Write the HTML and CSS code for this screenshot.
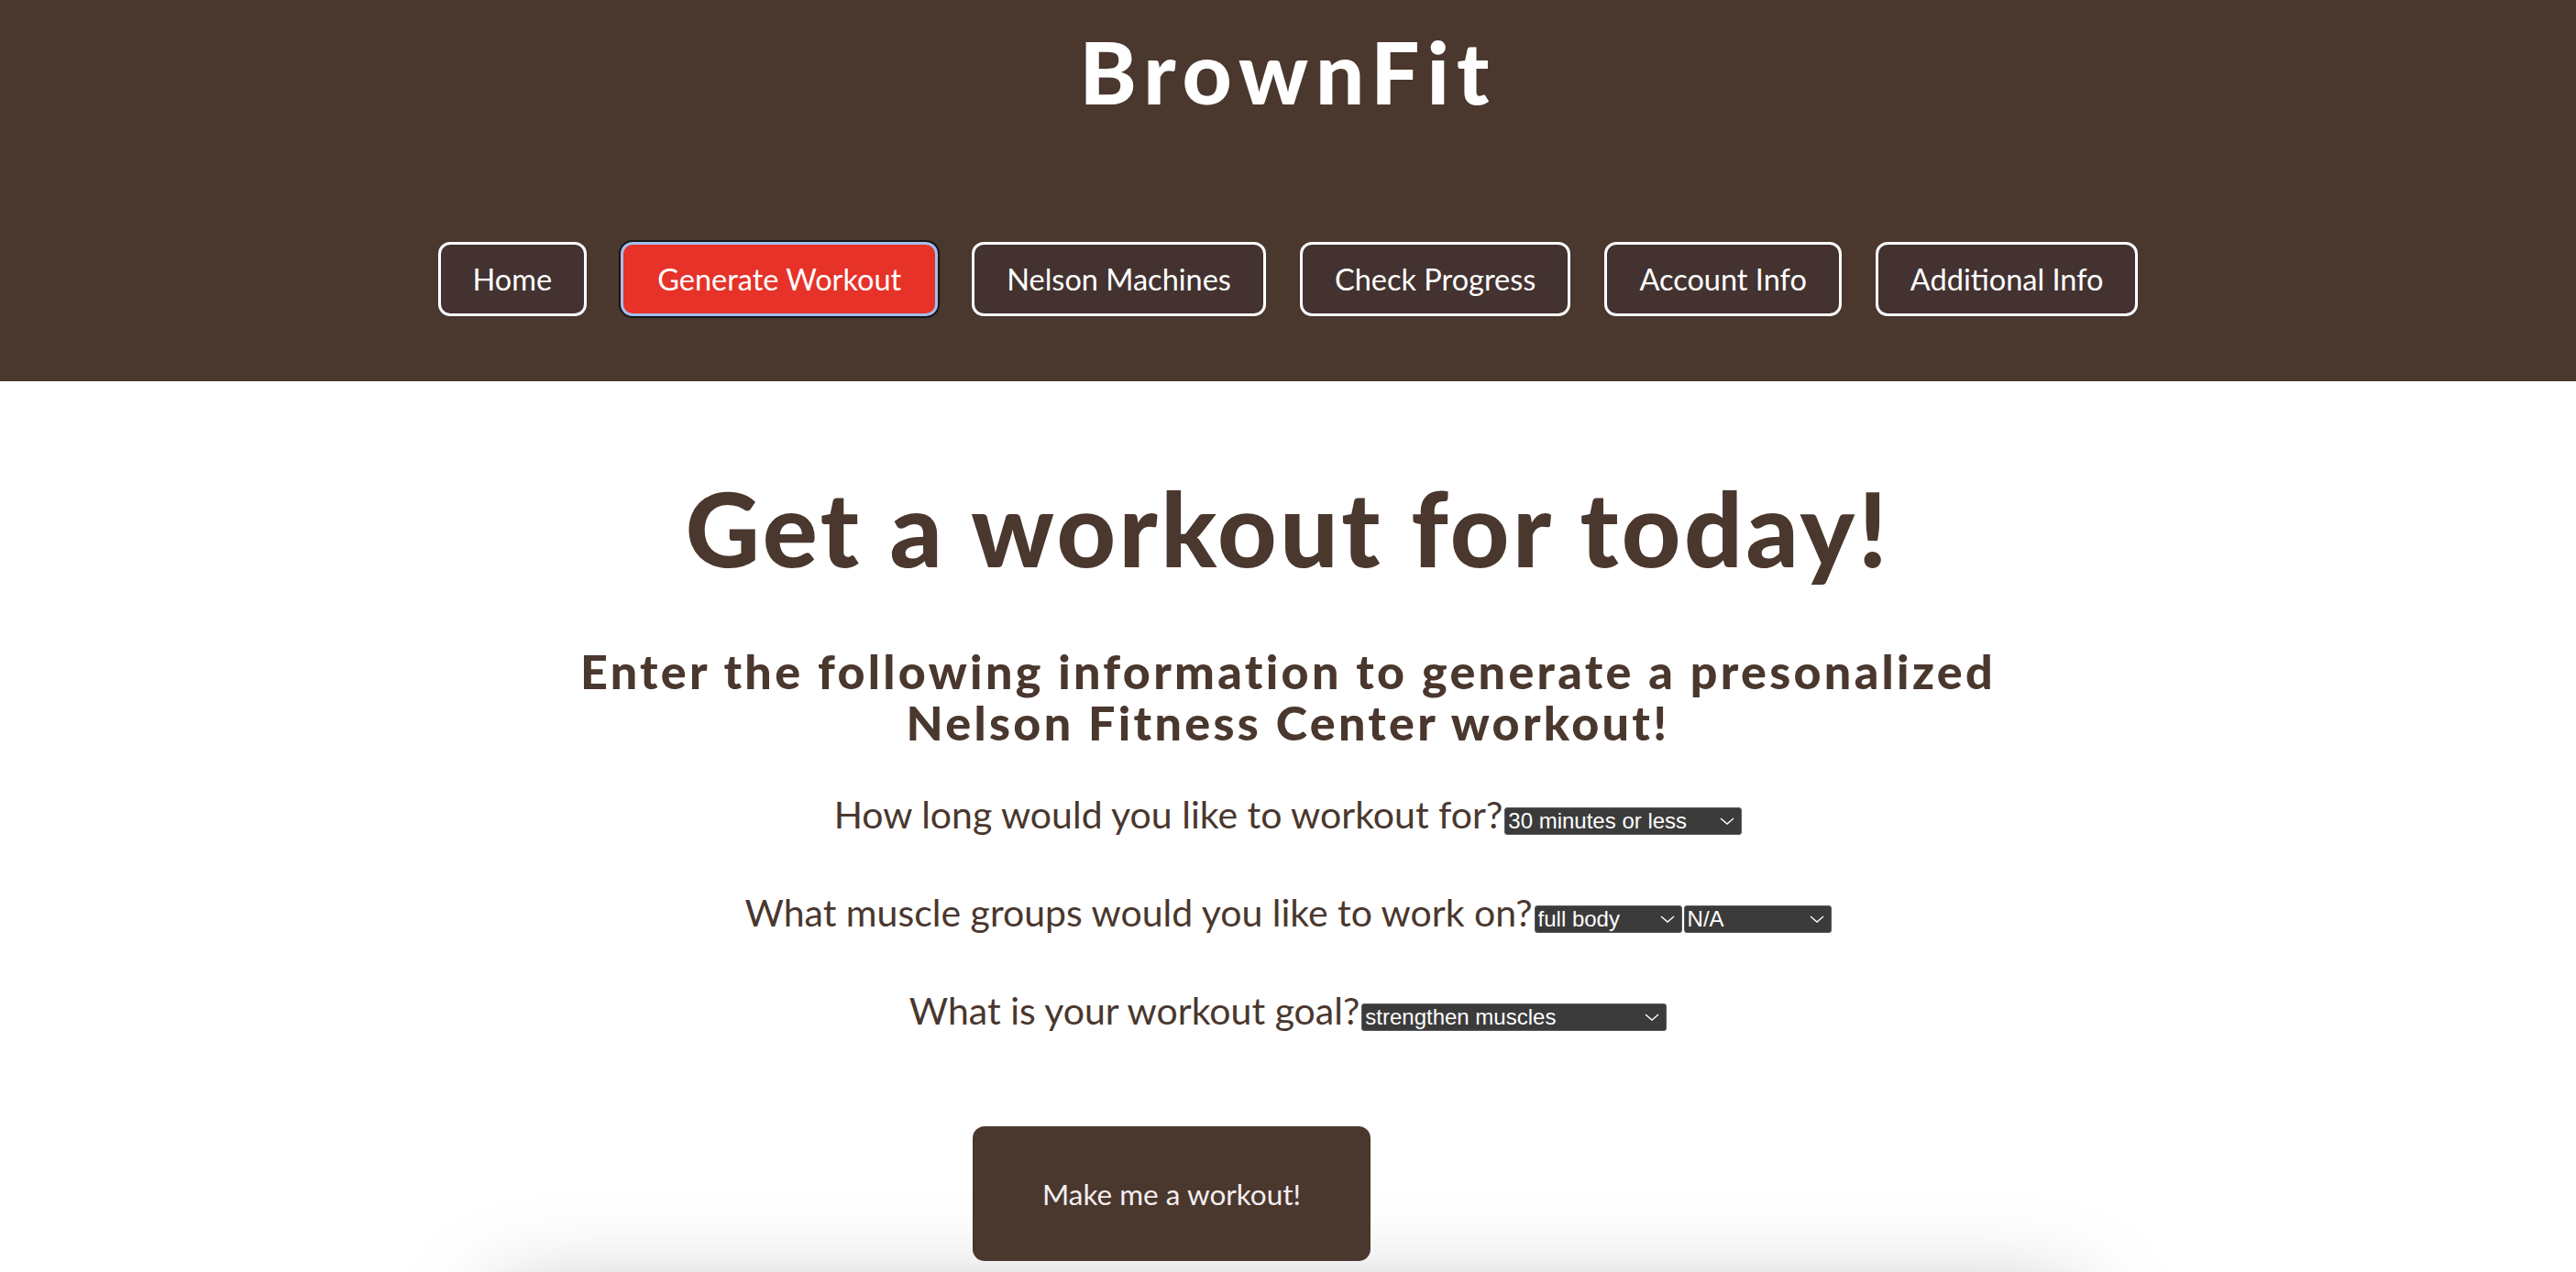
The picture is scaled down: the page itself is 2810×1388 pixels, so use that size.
FILE: index.html
```html
<!DOCTYPE html>
<html lang="en">
<head>
<meta charset="utf-8">
<title>BrownFit - Generate Workout</title>
<link rel="stylesheet" href="styles.css">
</head>
<body>
<header class="site-header">
  <h1 class="brand">BrownFit</h1>
  <nav class="nav">
    <a class="nav-btn" href="#">Home</a>
    <a class="nav-btn nav-btn--active" href="#">Generate Workout</a>
    <a class="nav-btn" href="#">Nelson Machines</a>
    <a class="nav-btn" href="#">Check Progress</a>
    <a class="nav-btn" href="#">Account Info</a>
    <a class="nav-btn" href="#">Additional Info</a>
  </nav>
</header>
<main class="main">
  <h2 class="page-title">Get a workout for today!</h2>
  <h3 class="intro">Enter the following information to generate a presonalized<br>Nelson Fitness Center workout!</h3>
  <form class="workout-form">
    <div class="question">How long would you like to workout for?<span class="select-wrap"><select class="select select--time"><option>30 minutes or less</option><option>30 - 60 minutes</option><option>60 minutes or more</option></select><svg class="chevron" viewBox="0 0 16 8" width="16" height="8"><path d="M1 1 L8 7 L15 1" fill="none" stroke="#ffffff" stroke-width="1.4"/></svg></span></div>
    <div class="question">What muscle groups would you like to work on?<span class="select-wrap"><select class="select select--group"><option>full body</option><option>arms</option><option>legs</option></select><svg class="chevron" viewBox="0 0 16 8" width="16" height="8"><path d="M1 1 L8 7 L15 1" fill="none" stroke="#ffffff" stroke-width="1.4"/></svg></span><span class="select-wrap"><select class="select select--group"><option>N/A</option><option>arms</option><option>legs</option></select><svg class="chevron" viewBox="0 0 16 8" width="16" height="8"><path d="M1 1 L8 7 L15 1" fill="none" stroke="#ffffff" stroke-width="1.4"/></svg></span></div>
    <div class="question">What is your workout goal?<span class="select-wrap"><select class="select select--goal"><option>strengthen muscles</option><option>lose weight</option><option>endurance</option></select><svg class="chevron" viewBox="0 0 16 8" width="16" height="8"><path d="M1 1 L8 7 L15 1" fill="none" stroke="#ffffff" stroke-width="1.4"/></svg></span></div>
    <div class="submit-row">
      <button type="button" class="submit-btn">Make me a workout!</button>
    </div>
  </form>
  <section class="results"></section>
</main>
</body>
</html>
```

FILE: styles.css
```css
html, body {
  margin: 0;
  padding: 0;
}

body {
  font-family: "Gill Sans", Lato, "Open Sans", sans-serif;
  background: #ffffff;
  color: #4a372e;
}

.site-header {
  background: #4a372e;
  height: 416px;
  box-sizing: border-box;
  padding-top: 22px;
}

.brand {
  margin: 0;
  text-align: center;
  color: #ffffff;
  font-size: 94px;
  font-weight: 900;
  line-height: 1.2;
  letter-spacing: 8px;
}

.nav {
  display: flex;
  justify-content: center;
  gap: 37px;
  margin-top: 129px;
}

.nav-btn {
  display: flex;
  align-items: center;
  height: 81px;
  box-sizing: border-box;
  padding: 0 35px;
  border: 3px solid #ffffff;
  border-radius: 13px;
  background: #433230;
  color: #ffffff;
  font-size: 32.5px;
  text-decoration: none;
}

.nav-btn--active {
  background: #e63228;
  border-color: #a3bfec;
  box-shadow: 0 0 0 2px #161616;
  padding: 0 37px;
}

.main {
  text-align: center;
}

.page-title {
  margin: 93px 0 0;
  font-size: 112px;
  font-weight: 900;
  line-height: 1.2;
  letter-spacing: 3.5px;
  color: #4a372e;
}

.intro {
  margin: 61px 0 0;
  font-size: 52px;
  font-weight: 900;
  line-height: 56px;
  letter-spacing: 3.3px;
  color: #4a372e;
}

.workout-form {
  margin-top: 49px;
}

.question {
  font-size: 41px;
  line-height: 48px;
  color: #4a372e;
  margin-bottom: 59px;
}

.select-wrap {
  position: relative;
  display: inline-flex;
  margin-left: 2px;
  vertical-align: baseline;
}

.select {
  appearance: none;
  -webkit-appearance: none;
  background-color: #3b3b3b;
  color: #ffffff;
  font-family: "Liberation Sans", Arial, sans-serif;
  font-size: 24px;
  line-height: 28px;
  height: 30px;
  padding: 0 0 0 3px;
  border: 1px solid #5a5a5a;
  border-radius: 3px;
  margin: 0;
  box-sizing: border-box;
}

.chevron {
  position: absolute;
  right: 8px;
  top: 11px;
  pointer-events: none;
}

.select--time { width: 259px; }
.select--group { width: 161px; }
.select--goal { width: 333px; }

.submit-row {
  display: flex;
  justify-content: center;
  padding-right: 254px;
  margin-top: 102px;
}

.submit-btn {
  width: 434px;
  height: 147px;
  border: none;
  border-radius: 13px;
  background: #4a372e;
  color: #f3eeee;
  font-family: "Gill Sans", Lato, "Open Sans", sans-serif;
  font-size: 31.5px;
}

.results {
  width: 1720px;
  height: 400px;
  margin: 48px auto 0;
  background: #ffffff;
  box-shadow: 0 0 100px rgba(0, 0, 0, 0.34);
}
```
